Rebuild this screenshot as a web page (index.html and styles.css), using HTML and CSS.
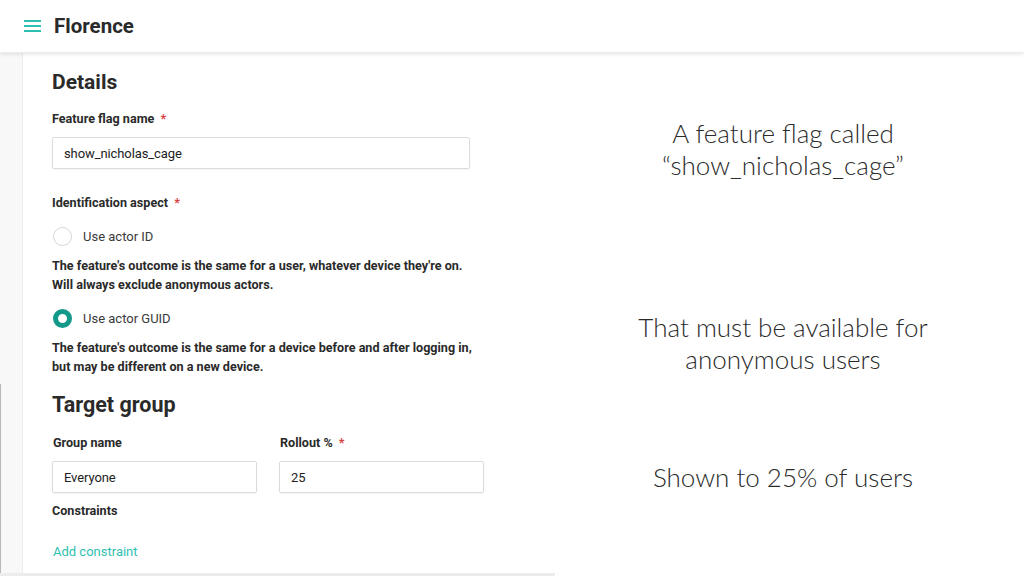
FILE: index.html
```html
<!DOCTYPE html>
<html lang="en">
<head>
  <meta charset="UTF-8" />
  <meta name="viewport" content="width=device-width, initial-scale=1.0">
  <title>Florence</title>
  <link rel="stylesheet" href="styles.css">
</head>
<body>

<header class="topbar">
  <svg class="menu-icon" width="17" height="12" viewBox="0 0 17 12">
    <rect x="0" y="0" width="17" height="2" fill="#2fc0b1"/>
    <rect x="0" y="5" width="17" height="2" fill="#2fc0b1"/>
    <rect x="0" y="10" width="17" height="2" fill="#2fc0b1"/>
  </svg>
  <span class="brand">Florence</span>
</header>

<div class="slide">
  <div class="app">
    <div class="sidebar">
      <div class="sidebar-track"></div>
    </div>
    <div class="form">
      <h2 class="section-title">Details</h2>

      <label class="field-label">Feature flag name <span class="req">*</span></label>
      <div class="input wide">show_nicholas_cage</div>

      <label class="field-label aspect">Identification aspect <span class="req">*</span></label>
      <div class="radio-row">
        <span class="radio"></span>
        <span class="radio-text">Use actor ID</span>
      </div>
      <p class="help">The feature's outcome is the same for a user, whatever device they're on.<br>Will always exclude anonymous actors.</p>

      <div class="radio-row">
        <span class="radio checked"></span>
        <span class="radio-text">Use actor GUID</span>
      </div>
      <p class="help last">The feature's outcome is the same for a device before and after logging in,<br>but may be different on a new device.</p>

      <h2 class="section-title target">Target group</h2>

      <div class="columns">
        <div class="col">
          <label class="field-label">Group name</label>
          <div class="input">Everyone</div>
        </div>
        <div class="col">
          <label class="field-label">Rollout % <span class="req">*</span></label>
          <div class="input">25</div>
        </div>
      </div>

      <label class="field-label constraints">Constraints</label>
      <a class="link">Add constraint</a>
    </div>
  </div>

  <div class="notes">
    <p class="note first">A feature flag called<br>“show_nicholas_cage”</p>
    <p class="note second">That must be available for<br>anonymous users</p>
    <p class="note third">Shown to 25% of users</p>
  </div>
</div>

</body>
</html>
```

FILE: styles.css
```css
body {
  margin: 0;
  padding: 0;
  width: 1024px;
  height: 576px;
  overflow: hidden;
  background: #fff;
  font-family: Roboto, 'Liberation Sans', sans-serif;
  color: #2a2a2a;
}

.topbar {
  height: 52px;
  display: flex;
  align-items: center;
  padding-left: 24px;
  background: #fff;
  box-shadow: 0 2px 3px rgba(0, 0, 0, 0.08);
  border-bottom: 1px solid #ececec;
  position: relative;
  z-index: 2;
}

.menu-icon {
  margin-right: 13px;
}

.brand {
  font-size: 20.5px;
  font-weight: bold;
  color: #2a2a2a;
}

.slide {
  display: flex;
  height: 523px;
}

.app {
  width: 555px;
  display: flex;
  border-bottom: 3px solid #ececec;
  box-sizing: border-box;
}

.sidebar {
  width: 22px;
  background: #f8f8f8;
  border-right: 1px solid #ededed;
  display: flex;
  flex-direction: column;
}

.sidebar-track {
  flex: 1;
  margin-top: 331px;
  border-left: 1px solid #b8b8b8;
}

.form {
  flex: 1;
  padding: 17px 0 0 29px;
  display: flex;
  flex-direction: column;
  align-items: flex-start;
}

.section-title {
  margin: 0;
  font-size: 21px;
  font-weight: bold;
  line-height: 24px;
}

.section-title.target {
  margin-top: 3px;
  font-size: 21.5px;
}

.field-label {
  display: block;
  font-size: 12.6px;
  font-weight: bold;
  line-height: 16px;
  margin-top: 17px;
  margin-bottom: 10px;
}

.field-label.aspect {
  margin-top: 26px;
  margin-bottom: 15px;
}

.field-label.constraints {
  margin-top: 10px;
}

.req {
  color: #d9423e;
  margin-left: 3px;
}

.input {
  box-sizing: border-box;
  height: 32px;
  border: 1px solid #dcdcdc;
  border-radius: 2px;
  box-shadow: 0 1px 2px rgba(0, 0, 0, 0.05);
  padding: 0 11px;
  display: flex;
  align-items: center;
  font-size: 13px;
  letter-spacing: -0.1px;
  color: #222;
}

.input.wide {
  width: 418px;
}

.radio-row {
  display: flex;
  align-items: center;
  height: 20px;
  margin-left: 1px;
}

.radio {
  box-sizing: border-box;
  width: 19px;
  height: 19px;
  border-radius: 50%;
  border: 1px solid #d6d6d6;
  margin-right: 11px;
}

.radio.checked {
  border: 5px solid #13998a;
  background: #fff;
}

.radio-text {
  font-size: 13px;
  color: #3a3a3a;
}

.help {
  margin: 10px 0 14px;
  font-size: 12.6px;
  font-weight: bold;
  line-height: 19px;
}

.columns {
  display: flex;
  gap: 22px;
}

.col {
  width: 205px;
}

.col .field-label {
  margin-top: 18px;
  margin-left: 1px;
}

.col .input {
  width: 205px;
}

.link {
  margin-top: 15px;
  margin-left: 1px;
  font-size: 13px;
  color: #2fc0b1;
}

.notes {
  flex: 1;
  display: flex;
  flex-direction: column;
  align-items: center;
  padding-right: 13px;
}

.note {
  margin: 0;
  text-align: center;
  font-family: Lato, 'Noto Sans', sans-serif;
  font-weight: 300;
  font-size: 26px;
  line-height: 32px;
  color: #2b2b2b;
}

.note.first {
  margin-top: 64px;
}

.note.second {
  margin-top: 130px;
}

.note.third {
  margin-top: 86px;
}
```
